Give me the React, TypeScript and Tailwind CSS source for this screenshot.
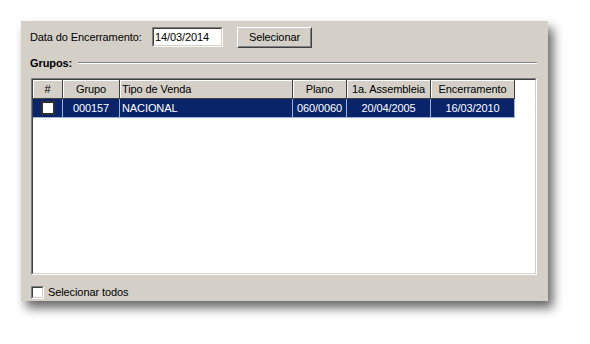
import React from 'react';

const cols = [
  { label: '#', w: 'w-[30px]', align: 'justify-center' },
  { label: 'Grupo', w: 'w-[57px]', align: 'justify-center' },
  { label: 'Tipo de Venda', w: 'w-[173px]', align: 'justify-start pl-[2px]' },
  { label: 'Plano', w: 'w-[54px]', align: 'justify-center' },
  { label: '1a. Assembleia', w: 'w-[84px]', align: 'justify-center' },
  { label: 'Encerramento', w: 'w-[84px]', align: 'justify-center' },
];

const row = ['', '000157', 'NACIONAL', '060/0060', '20/04/2005', '16/03/2010'];

function SunkenBox({ className }: { className?: string }) {
  return (
    <div className={`border border-t-[#808080] border-l-[#808080] border-b-white border-r-white ${className ?? ''}`}>
      <div className="w-full h-full border border-t-[#404040] border-l-[#404040] border-b-[#d4d0c8] border-r-[#d4d0c8] bg-white" />
    </div>
  );
}

export default function App() {
  return (
    <div className="w-[590px] h-[344px] bg-white pt-[21px] pl-[21px] font-['Liberation_Sans',Arial,sans-serif] text-[11px] tracking-[-0.1px] text-black">
      <div className="w-[527px] h-[280px] bg-[#d4d0c8] shadow-[5px_7px_10px_rgba(0,0,0,0.6)] flex flex-col">
        {/* linha da data */}
        <div className="flex items-center h-[20px] mt-[6px] pl-[9px]">
          <span className="w-[122px]">Data do Encerramento:</span>
          <div className="w-[71px] h-[20px] border border-t-[#808080] border-l-[#808080] border-b-white border-r-white">
            <div className="w-full h-full border border-t-[#404040] border-l-[#404040] border-b-[#d4d0c8] border-r-[#d4d0c8] bg-white pl-[1px] leading-[16px]">
              14/03/2014
            </div>
          </div>
          <div className="ml-[14px] w-[75px] h-[21px] border border-t-white border-l-white border-b-[#404040] border-r-[#404040]">
            <div className="w-full h-full border border-t-[#d4d0c8] border-l-[#d4d0c8] border-b-[#808080] border-r-[#808080] flex items-center justify-center">
              Selecionar
            </div>
          </div>
        </div>

        {/* Grupos */}
        <div className="flex items-center mt-[9px] pl-[9px] pr-[11px] h-[14px]">
          <span className="font-bold">Grupos:</span>
          <div className="flex-1 ml-[6px] border-t border-t-[#808080] border-b border-b-white" />
        </div>

        {/* tabela */}
        <div className="ml-[10px] mt-[8px] w-[506px] h-[197px] border border-t-[#808080] border-l-[#808080] border-b-white border-r-white">
          <div className="w-full h-full border border-t-[#404040] border-l-[#404040] border-b-[#d4d0c8] border-r-[#d4d0c8] bg-white overflow-hidden">
            <div className="flex h-[19px]">
              {cols.map((c) => (
                <div
                  key={c.label}
                  className={`${c.w} h-full flex items-center ${c.align} bg-[#d4d0c8] border-r border-b border-[#404040] shadow-[inset_1px_1px_0_#fff]`}
                >
                  {c.label}
                </div>
              ))}
            </div>
            <div className="flex h-[19px]">
              {cols.map((c, i) => (
                <div
                  key={c.label}
                  className={`${c.w} h-full flex items-center ${c.align} bg-[#0a246a] text-white border-r border-b border-[#9fb0d6]`}
                >
                  {i === 0 ? (
                    <div className="w-[14px] h-[14px] bg-white border-2 border-[#303030]" />
                  ) : (
                    row[i]
                  )}
                </div>
              ))}
            </div>
          </div>
        </div>

        {/* selecionar todos */}
        <div className="flex items-center mt-[9px] pl-[10px]">
          <SunkenBox className="w-[13px] h-[13px]" />
          <span className="ml-[4px]">Selecionar todos</span>
        </div>
      </div>
    </div>
  );
}
